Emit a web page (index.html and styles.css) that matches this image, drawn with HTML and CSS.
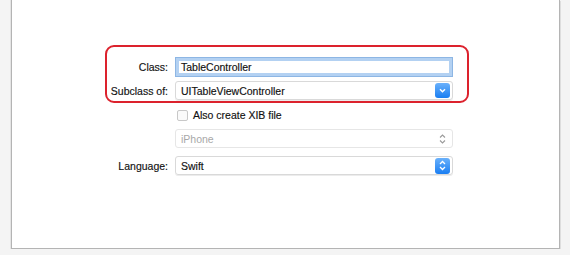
FILE: index.html
```html
<!DOCTYPE html>
<html>
    <head>
        <meta charset="utf-8">
        <title>New File Options</title>
        <link rel="stylesheet" href="styles.css">
    </head>
    <body>
        <div class="panel">
            <div class="highlight">
                <div class="row row-class">
                    <span class="label">Class:</span>
                    <div class="field">TableController</div>
                </div>
                <div class="row row-sub">
                    <span class="label">Subclass of:</span>
                    <div class="popup">
                        <span>UITableViewController</span>
                        <span class="btn">
                            <svg width="9" height="9" viewBox="0 0 9 9"><path d="M2 3.2 L4.5 5.8 L7 3.2" fill="none" stroke="#fff" stroke-width="1.4"/></svg>
                        </span>
                    </div>
                </div>
            </div>
            <div class="rest">
                <div class="row row-check">
                    <span class="label"></span>
                    <label class="check"><span class="box"></span>Also create XIB file</label>
                </div>
                <div class="row row-device">
                    <span class="label"></span>
                    <div class="popup disabled">
                        <span>iPhone</span>
                        <span class="arrows">
                            <svg width="9" height="12" viewBox="0 0 9 12"><path d="M2 4.5 L4.5 2 L7 4.5 M2 7.5 L4.5 10 L7 7.5" fill="none" stroke="#9a9a9a" stroke-width="1.1"/></svg>
                        </span>
                    </div>
                </div>
                <div class="row row-lang">
                    <span class="label">Language:</span>
                    <div class="popup">
                        <span>Swift</span>
                        <span class="btn tall">
                            <svg width="9" height="13" viewBox="0 0 9 13"><path d="M2 5 L4.5 2.5 L7 5 M2 8 L4.5 10.5 L7 8" fill="none" stroke="#fff" stroke-width="1.3"/></svg>
                        </span>
                    </div>
                </div>
            </div>
        </div>
    </body>
</html>
```

FILE: styles.css
```css
*{
    margin: 0;
    padding: 0;
    box-sizing: border-box;
}
body{
    background: #f4f4f4;
    font-family: "Liberation Sans", Arial, sans-serif;
    font-size: 10.5px;
    color: #111;
    -webkit-text-stroke: 0.15px #111;
}
.panel{
    margin-left: 11px;
    width: 549px;
    height: 249px;
    background: #fff;
    border: 1px solid #b4b4b4;
    border-top: none;
    box-shadow: 1px 1px 0 #dedede, -1px 0 0 #e4e4e4;
    padding-top: 45px;
}
.highlight{
    margin-left: 93px;
    width: 364px;
    height: 58px;
    border: 2px solid #dc222d;
    border-radius: 9px;
    padding-top: 10px;
}
.row{
    display: grid;
    grid-template-columns: 61px 278px;
    column-gap: 7px;
    align-items: center;
}
.label{
    text-align: right;
}
.row-class{
    height: 20px;
}
.row-sub{
    margin-top: 4px;
    height: 19px;
}
.field{
    height: 20px;
    border: 1px solid #8db6e4;
    box-shadow: 0 0 0 3px #b3d1f2 inset;
    padding: 0 5px;
    line-height: 18px;
}
.popup{
    height: 19px;
    border: 1px solid #d9d9d9;
    border-radius: 3px;
    box-shadow: 0 1px 0 #ececec;
    display: flex;
    align-items: center;
    justify-content: space-between;
    padding: 0 2px 0 5px;
}
.popup.disabled{
    color: #a8a8a8;
    -webkit-text-stroke: 0;
    border-color: #e6e6e6;
    box-shadow: none;
}
.btn{
    width: 15px;
    height: 15px;
    border-radius: 3px;
    background: linear-gradient(#6ab1fb, #1a7ef2);
    display: flex;
    align-items: center;
    justify-content: center;
}
.btn.tall{
    height: 16px;
}
.arrows{
    width: 15px;
    display: flex;
    justify-content: center;
}
.rest{
    margin-left: 95px;
    padding-top: 5px;
}
.row-check{
    height: 14px;
}
.check{
    display: flex;
    align-items: center;
    gap: 5px;
    margin-left: 2px;
}
.box{
    width: 11px;
    height: 11px;
    border: 1px solid #c8c8c8;
    border-radius: 2px;
    background: #fafafa;
}
.row-device{
    margin-top: 7px;
}
.row-lang{
    margin-top: 8px;
}
```
